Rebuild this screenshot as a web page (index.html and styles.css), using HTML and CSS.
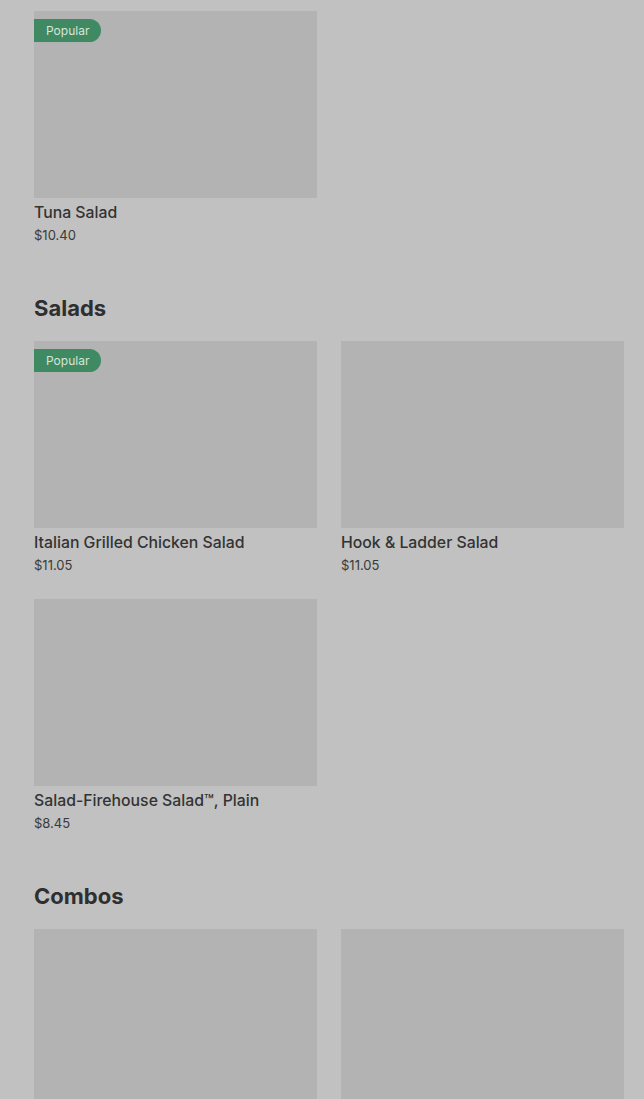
FILE: index.html
```html
<!DOCTYPE html>
<html>
<head>
<meta charset="utf-8">
<link rel="stylesheet" href="styles.css">
</head>
<body>
<main class="menu">
  <section class="section first">
    <div class="grid">
      <div class="card">
        <div class="thumb"><span class="badge">Popular</span></div>
        <div class="name">Tuna Salad</div>
        <div class="price">$10.40</div>
      </div>
    </div>
  </section>
  <section class="section">
    <h2 class="heading">Salads</h2>
    <div class="grid">
      <div class="card">
        <div class="thumb"><span class="badge">Popular</span></div>
        <div class="name">Italian Grilled Chicken Salad</div>
        <div class="price">$11.05</div>
      </div>
      <div class="card">
        <div class="thumb"></div>
        <div class="name">Hook &amp; Ladder Salad</div>
        <div class="price">$11.05</div>
      </div>
      <div class="card">
        <div class="thumb"></div>
        <div class="name">Salad-Firehouse Salad™, Plain</div>
        <div class="price">$8.45</div>
      </div>
    </div>
  </section>
  <section class="section">
    <h2 class="heading">Combos</h2>
    <div class="grid">
      <div class="card">
        <div class="thumb"></div>
      </div>
      <div class="card">
        <div class="thumb"></div>
      </div>
    </div>
  </section>
</main>
</body>
</html>
```
FILE: styles.css
```css
html, body {
  margin: 0;
  padding: 0;
  background: #c1c1c1;
  height: 1099px;
  overflow: hidden;
}
body {
  font-family: Inter, "Noto Sans", sans-serif;
  color: #333333;
}
.menu {
  padding: 11px 20px 0 34px;
  display: flex;
  flex-direction: column;
  gap: 49px;
}
.heading {
  margin: 0 0 19px 0;
  font-size: 22px;
  line-height: 28px;
  font-weight: 700;
  letter-spacing: 0;
  color: #2f2f2f;
}
.grid {
  display: grid;
  grid-template-columns: 283px 283px;
  column-gap: 24px;
  row-gap: 24px;
}
.card {
  display: flex;
  flex-direction: column;
}
.thumb {
  position: relative;
  height: 187px;
  background: #b3b3b3;
}
.badge {
  position: absolute;
  left: 0;
  top: 8px;
  height: 23px;
  padding: 0 12px;
  display: flex;
  align-items: center;
  background: #3f8a63;
  color: #d6e6dc;
  font-size: 12px;
  border-radius: 0 12px 12px 0;
}
.name {
  margin-top: 4px;
  font-size: 15.8px;
  line-height: 22px;
  font-weight: 500;
  color: #333333;
}
.price {
  margin-top: 1px;
  font-size: 13px;
  line-height: 20px;
  color: #3a3a3a;
}
```
